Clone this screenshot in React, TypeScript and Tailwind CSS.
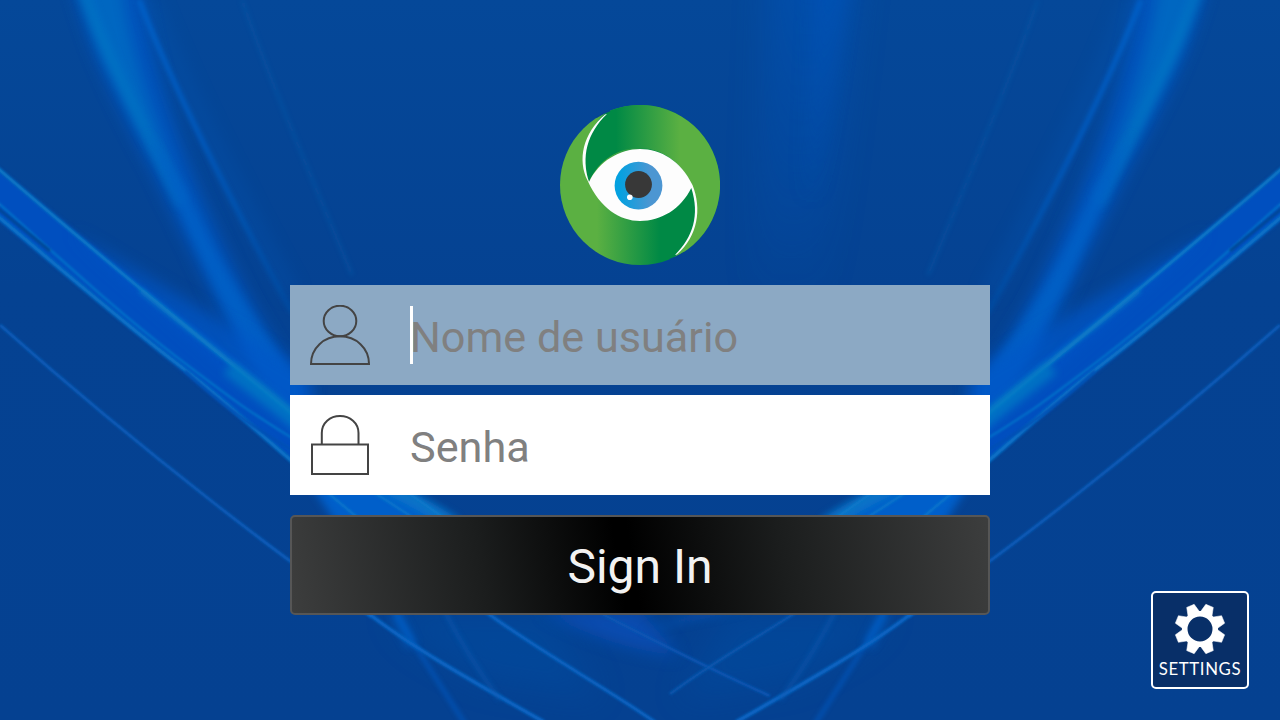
import type { ReactNode } from "react";

const TEETH = [22.5, 67.5, 112.5, 157.5, 202.5, 247.5, 292.5, 337.5];

// One half of the light rays, the other half is the same group flipped
function Rays() {
  return (
    <g fill="none">
      {/* wide beam */}
      <path
        d="M72 -20H140C150 50 172 130 207 210C235 275 265 335 310 395V450L240 350C210 290 180 225 150 165C115 100 90 50 72 -20Z"
        fill="#0556c2"
        opacity=".85"
        filter="url(#soft8)"
      />
      <path
        d="M78 -20H120C130 50 150 115 186 200C158 160 130 110 106 65Q90 32 78 -20Z"
        fill="#0670c4"
        opacity=".7"
        filter="url(#soft6)"
      />
      <path d="M82 -10C108 58 142 128 182 205" stroke="#067cc6" strokeWidth="9" opacity=".6" filter="url(#soft4)" />
      <path d="M146 130L186 190C208 240 238 300 300 385V440L252 360C215 290 185 225 146 130Z" fill="#0560c6" opacity=".9" filter="url(#soft4)" />

      {/* thin inner lines */}
      <path d="M150 0C180 80 234 190 292 295" stroke="#0558b8" strokeWidth="18" opacity=".25" filter="url(#soft8)" />
      <path d="M139 0C170 80 225 190 292 312" stroke="url(#fade)" strokeWidth="5" filter="url(#soft2)" />
      <path d="M242 0C268 75 300 150 352 275" stroke="#0858a8" strokeWidth="4" opacity=".45" filter="url(#soft2)" />

      {/* side beam */}
      <path d="M-10 162C70 228 170 308 310 415V475L170 360L-10 212Z" fill="#0551c4" opacity=".9" filter="url(#soft2)" />
      <path d="M70 230C140 275 215 315 310 375V440Z" fill="#0557c8" opacity=".75" filter="url(#soft8)" />
      <path d="M-5 166C80 240 180 321 292 414" stroke="#087ac8" strokeWidth="3.2" filter="url(#soft1)" />
      <path d="M140 290C176 320 230 360 300 418" stroke="#087ac6" strokeWidth="5" opacity=".75" filter="url(#soft2)" />
      <path d="M-5 200C60 258 115 310 178 358S250 412 292 438" stroke="#0775cb" strokeWidth="2" filter="url(#soft1)" />
      <path d="M-5 206L50 251" stroke="#064795" strokeWidth="3" filter="url(#soft1)" />
      <path d="M-5 214C60 268 120 320 175 362S250 427 355 515" stroke="#0772c8" strokeWidth="4" filter="url(#soft1)" />
      <path d="M185 371C220 403 250 426 292 450" stroke="#0650b4" strokeWidth="2.5" filter="url(#soft1)" />
      <path d="M228 368C250 385 270 400 300 425" stroke="#067ac4" strokeWidth="14" opacity=".8" filter="url(#soft4)" />
      <path d="M308 480H390L470 530H340Z" fill="#055fca" filter="url(#soft4)" />
      <path d="M370 478C395 492 420 502 455 525" stroke="#0878c8" strokeWidth="14" opacity=".85" filter="url(#soft4)" />
      <path d="M328 493L358 518M375 493L412 517M404 490L444 518" stroke="#0a7ccc" strokeWidth="2.5" opacity=".8" filter="url(#soft1)" />

      {/* long lower line */}
      <path d="M0 325C80 396 150 453 214 503S320 584 372 617" stroke="#0a5fbe" strokeWidth="2.8" filter="url(#soft1)" />
      <path d="M390 610H550L600 700L480 680L412 640Z" fill="#054da2" opacity=".45" filter="url(#soft16)" />
      <path d="M392 605C402 625 408 632 414 644L465 724" stroke="#0556bc" strokeWidth="5" opacity=".65" filter="url(#soft2)" />
      <path d="M395 612L412 646" stroke="#0560c8" strokeWidth="10" opacity=".7" filter="url(#soft4)" />
      <path d="M368 613C410 646 470 680 544 722" stroke="#0765c4" strokeWidth="4" filter="url(#soft1)" />
      <path d="M445 612Q470 660 500 700" stroke="#0758b0" strokeWidth="5" opacity=".5" filter="url(#soft2)" />
    </g>
  );
}

function Background() {
  return (
    <svg className="absolute inset-0 size-full" viewBox="0 0 1280 720" aria-hidden="true">
      <defs>
        <filter id="soft1" filterUnits="userSpaceOnUse" x="-50" y="-50" width="1380" height="820">
          <feGaussianBlur stdDeviation="1" />
        </filter>
        <filter id="soft2" filterUnits="userSpaceOnUse" x="-50" y="-50" width="1380" height="820">
          <feGaussianBlur stdDeviation="2" />
        </filter>
        <filter id="soft4" filterUnits="userSpaceOnUse" x="-50" y="-50" width="1380" height="820">
          <feGaussianBlur stdDeviation="4" />
        </filter>
        <filter id="soft6" filterUnits="userSpaceOnUse" x="-50" y="-50" width="1380" height="820">
          <feGaussianBlur stdDeviation="6" />
        </filter>
        <filter id="soft8" filterUnits="userSpaceOnUse" x="-50" y="-50" width="1380" height="820">
          <feGaussianBlur stdDeviation="8" />
        </filter>
        <filter id="soft16" filterUnits="userSpaceOnUse" x="-50" y="-100" width="1380" height="870">
          <feGaussianBlur stdDeviation="16" />
        </filter>
        <linearGradient id="sky" x1="0" y1="0" x2="0" y2="1">
          <stop offset="0" stopColor="#054899" />
          <stop offset=".4" stopColor="#054292" />
          <stop offset="1" stopColor="#054191" />
        </linearGradient>
        <linearGradient id="fade" gradientUnits="userSpaceOnUse" x1="0" y1="0" x2="0" y2="310">
          <stop offset="0" stopColor="#0560c8" />
          <stop offset=".45" stopColor="#0559bd" />
          <stop offset="1" stopColor="#054ba0" />
        </linearGradient>
        <linearGradient id="glow" x1="0" y1="0" x2="0" y2="1">
          <stop offset="0" stopColor="#0553b8" />
          <stop offset="1" stopColor="#0553b8" stopOpacity="0.05" />
        </linearGradient>
      </defs>
      <rect width="1280" height="720" fill="url(#sky)" />
      <path d="M770 -60H862L825 300H750Z" fill="url(#glow)" opacity=".6" filter="url(#soft16)" />
      <path d="M815 -60H855L822 200H800Z" fill="url(#glow)" opacity=".7" filter="url(#soft8)" />
      <Rays />
      <g transform="matrix(-1 0 0 1 1280 0)">
        <Rays />
      </g>
      <g fill="none">
        <path d="M540 610H640L680 656Q610 650 540 610Z" fill="#0752c4" opacity=".6" filter="url(#soft8)" />
        <path d="M750 610H700L640 632Z" fill="#0752b4" opacity=".5" filter="url(#soft4)" />
        <path d="M486 612C540 652 600 684 655 722" stroke="#0763c2" strokeWidth="3.5" filter="url(#soft1)" />
        <path d="M602 614C650 638 690 660 770 696" stroke="#0856b4" strokeWidth="3" filter="url(#soft1)" />
        <path d="M795 613C750 642 710 664 670 694" stroke="#0756ae" strokeWidth="3" filter="url(#soft1)" />
      </g>
    </svg>
  );
}

function EyeLogo() {
  return (
    <svg className="size-40" viewBox="0 0 160 160" aria-hidden="true">
      <defs>
        <linearGradient id="top" gradientUnits="userSpaceOnUse" x1="56" y1="0" x2="120" y2="0">
          <stop offset="0" stopColor="#008945" />
          <stop offset="1" stopColor="#5bb042" />
        </linearGradient>
        <linearGradient id="bottom" gradientUnits="userSpaceOnUse" x1="37" y1="0" x2="100" y2="0">
          <stop offset="0" stopColor="#5bb042" />
          <stop offset="1" stopColor="#008945" />
        </linearGradient>
        <linearGradient id="iris">
          <stop offset=".1" stopColor="#04a1e0" />
          <stop offset=".75" stopColor="#4c96d2" />
        </linearGradient>
      </defs>
      <circle cx="80" cy="80" r="80" fill="url(#bottom)" />
      <path
        d="M46 7.500A80 80 0 1 1 114 152.500C134 135 142 106 132.500 82C112 32 50 30 29 77C20 50 27 24 46 7.500Z"
        fill="url(#top)"
      />
      <path
        d="M45 9.500C23 28 17 55 27.800 76C40 103 60 116 80 116C101 116 121 104 131.300 83C140 110 133 132 115 150L117 149.500C138 131 142 104 132.500 80C121 56 101 44 80 44C60 44 39 56 29 77C21 52 27 28 47 9Z"
        fill="#fdfdfd"
      />
      {/* small notches where the two halves meet the rim */}
      <path d="M36 12.500Q42 8.500 50 5.500" fill="none" stroke="#06458f" strokeWidth="1.400" />
      <path d="M110 154.500Q118 151.500 124 147.500" fill="none" stroke="#06458f" strokeWidth="1.400" />
      <circle cx="78.500" cy="80.700" r="23.900" fill="url(#iris)" />
      <circle cx="78.500" cy="79.500" r="13.400" fill="#383838" />
      <circle cx="69.800" cy="92.300" r="2.800" fill="#fff" />
    </svg>
  );
}

function UserIcon() {
  return (
    <svg className="size-15 shrink-0" viewBox="0 0 60 60" fill="none" stroke="currentColor" strokeWidth="2">
      <ellipse cx="30" cy="16" rx="16.300" ry="15.300" />
      <path d="M1 59C1 43 14 31.300 30 31.300S59 43 59 59Z" />
    </svg>
  );
}

function LockIcon() {
  return (
    <svg className="size-15 shrink-0" viewBox="0 0 60 60" fill="none" stroke="currentColor" strokeWidth="2">
      <path d="M11.800 29.500V18C11.800 8 20 1 30 1S48.500 8 48.500 18V29.500" />
      <path d="M2 29.500H58V59H2Z" />
    </svg>
  );
}

function GearIcon() {
  return (
    <svg className="size-[52px]" viewBox="-26 -26 52 52" fill="currentColor">
      <circle r="15.300" fill="none" stroke="currentColor" strokeWidth="5.600" />
      {TEETH.map((angle) => (
        <path
          key={angle}
          d="M-6.200 -16L-4 -25H4L6.200 -16Z"
          stroke="currentColor"
          strokeWidth=".5"
          strokeLinejoin="round"
          transform={`rotate(${angle})`}
        />
      ))}
    </svg>
  );
}

type FieldProps = {
  icon: ReactNode;
  type: string;
  placeholder: string;
  focused?: boolean;
};

function Field({ icon, type, placeholder, focused }: FieldProps) {
  return (
    <label className={`flex h-[100px] items-center px-5 text-[#444] ${focused ? "bg-[#8ca9c4]" : "bg-white"}`}>
      {icon}
      <span className={`ml-10 h-[58px] w-[3px] ${focused ? "bg-white" : ""}`} />
      <input
        type={type}
        placeholder={placeholder}
        className="-ml-[3px] h-full min-w-0 flex-1 bg-transparent pt-1 text-[43.2px] text-[#444] outline-none placeholder:text-[#808080]"
      />
    </label>
  );
}

export default function App() {
  return (
    <main className="relative h-[720px] w-[1280px] overflow-hidden bg-[#054292] font-['Roboto',sans-serif]">
      <Background />
      <div className="relative flex h-full flex-col items-center pt-[105px]">
        <EyeLogo />
        <form className="mt-5 flex w-[700px] flex-col" onSubmit={(e) => e.preventDefault()}>
          <Field icon={<UserIcon />} type="text" placeholder="Nome de usuário" focused />
          <div className="h-2.5" />
          <Field icon={<LockIcon />} type="password" placeholder="Senha" />
          <button
            type="submit"
            className="mt-5 h-[100px] rounded-[5px] border-2 border-[#565656] bg-[linear-gradient(81deg,#3d3e3e,#1b1d1d_28%,#000_47%,#000_49%,#1b1d1d_70%,#3d3e3e)] bg-origin-border pt-1 text-5xl text-[#f2f2f2]"
          >
            Sign In
          </button>
        </form>
      </div>
      <button
        type="button"
        className="absolute right-[31px] bottom-[31px] flex size-[98px] flex-col items-center rounded-[5px] border-2 border-white bg-[#082f68] pt-[10px] font-['Lato',sans-serif] text-[16.8px] leading-5 tracking-[0.6px] text-white"
      >
        <GearIcon />
        <span className="mt-1">SETTINGS</span>
      </button>
    </main>
  );
}
